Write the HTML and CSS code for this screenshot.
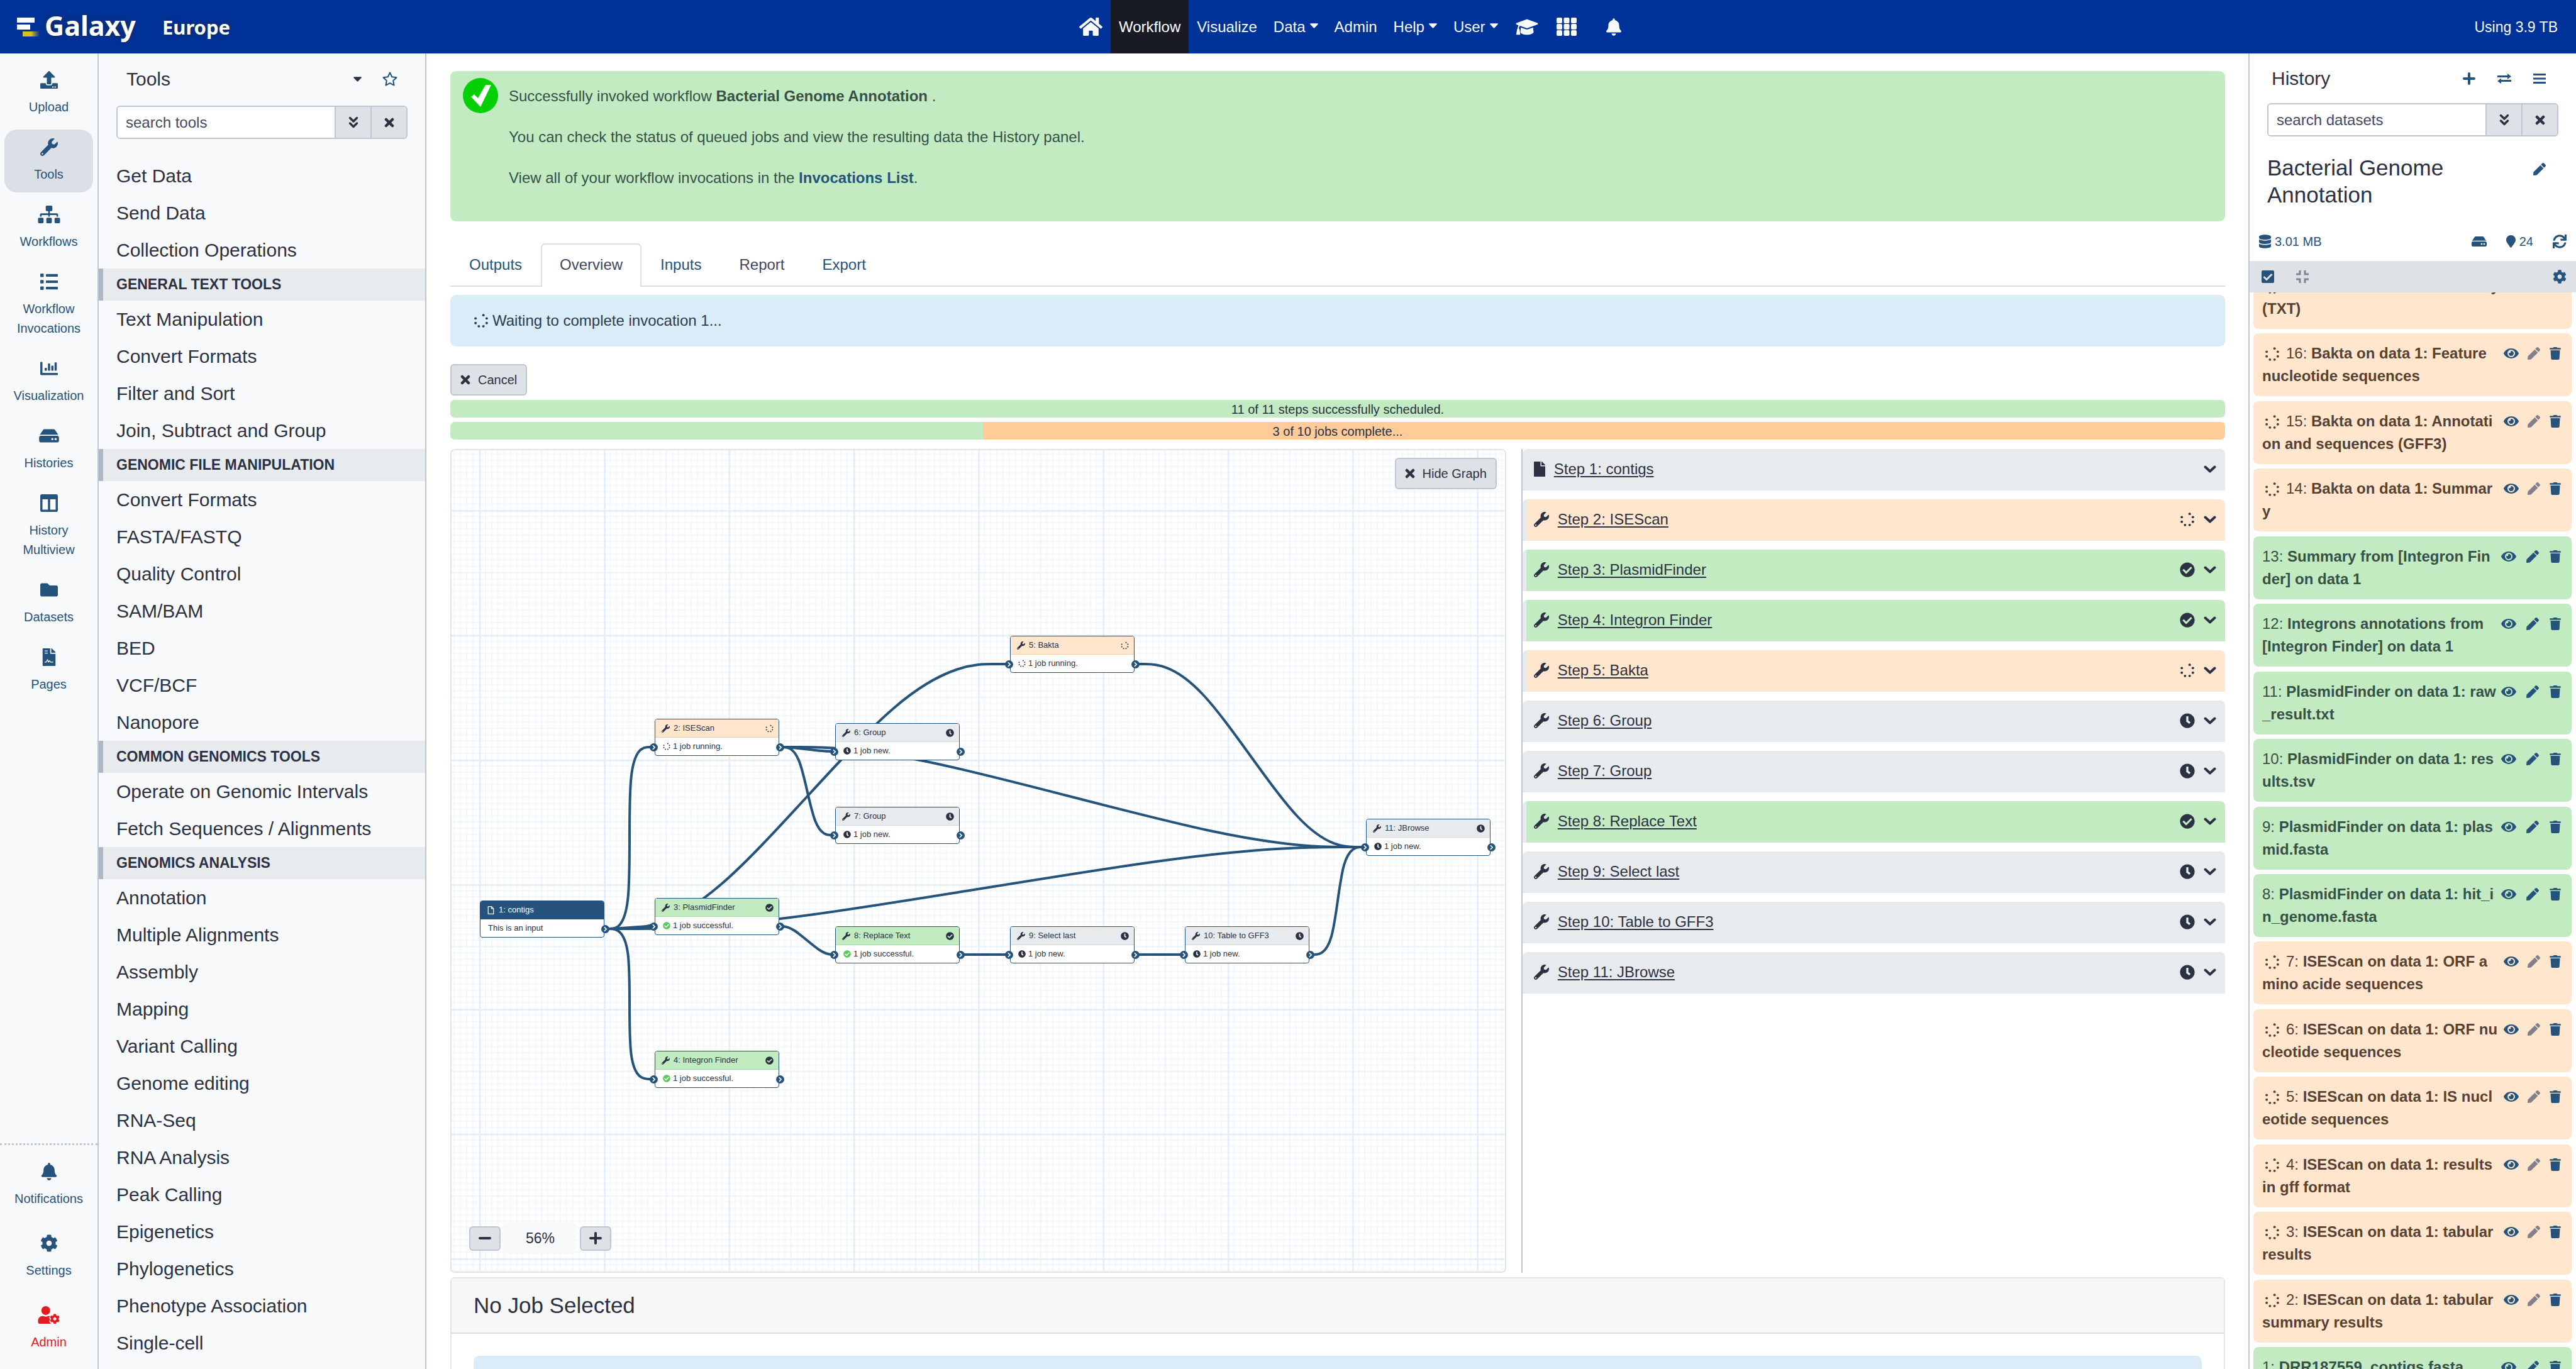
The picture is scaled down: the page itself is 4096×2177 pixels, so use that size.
FILE: index.html
```html
<!DOCTYPE html>
<html lang="en">
<head>
<meta charset="utf-8">
<title>Galaxy Europe</title>
<link rel="stylesheet" href="styles.css">
</head>
<body>
<svg class="sprite" aria-hidden="true">
  <defs>
    <linearGradient id="fade"><stop offset="0" stop-color="#d8c126"/><stop offset=".5" stop-color="#d8c126"/><stop offset="1" stop-color="#d8c126" stop-opacity="0"/></linearGradient>
  </defs>
  <symbol id="logo" viewBox="0 0 36 30"><path fill="#fff" d="M0 0h28v8H0zM0 11h21v8H0z"/><path fill="url(#fade)" d="M9 22h27v8H9z"/></symbol>
  <symbol id="wrench" viewBox="0 0 512 512"><path d="M507.73 109.1c-2.24-9.03-13.54-12.09-20.12-5.51l-74.36 74.36-67.88-11.31-11.31-67.88 74.36-74.36c6.62-6.62 3.43-17.9-5.66-20.16-47.38-11.74-99.55.91-136.58 37.93-39.64 39.64-50.55 97.1-34.05 147.2L18.74 402.76c-24.99 24.99-24.99 65.51 0 90.5 24.99 24.99 65.51 24.99 90.5 0l213.21-213.21c50.12 16.71 107.47 5.68 147.37-34.22 37.07-37.07 49.7-89.32 37.91-136.73zM64 472c-13.25 0-24-10.75-24-24 0-13.26 10.75-24 24-24s24 10.74 24 24c0 13.25-10.75 24-24 24z"/></symbol>
  <symbol id="upload" viewBox="0 0 512 512"><path d="M296 384h-80c-13.3 0-24-10.7-24-24V192h-87.7c-17.8 0-26.7-21.5-14.1-34.1L242.3 5.7c7.5-7.5 19.8-7.5 27.3 0l152.2 152.2c12.6 12.6 3.7 34.1-14.1 34.1H320v168c0 13.3-10.7 24-24 24zm216-8v112c0 13.3-10.7 24-24 24H24c-13.3 0-24-10.7-24-24V376c0-13.3 10.7-24 24-24h136v8c0 30.9 25.1 56 56 56h80c30.9 0 56-25.1 56-56v-8h136c13.3 0 24 10.7 24 24zm-124 88c0-11-9-20-20-20s-20 9-20 20 9 20 20 20 20-9 20-20zm64 0c0-11-9-20-20-20s-20 9-20 20 9 20 20 20 20-9 20-20z"/></symbol>
  <symbol id="sitemap" viewBox="0 0 640 512"><path d="M128 352H32c-17.67 0-32 14.33-32 32v96c0 17.67 14.33 32 32 32h96c17.67 0 32-14.33 32-32v-96c0-17.67-14.33-32-32-32zm-24-80h192v48h48v-48h192v48h48v-57.59c0-21.17-17.23-38.41-38.41-38.41H344v-64h40c17.67 0 32-14.33 32-32V32c0-17.67-14.33-32-32-32H256c-17.67 0-32 14.33-32 32v96c0 17.67 14.33 32 32 32h40v64H94.41C73.23 224 56 241.23 56 262.41V320h48v-48zm264 80h-96c-17.67 0-32 14.33-32 32v96c0 17.67 14.33 32 32 32h96c17.67 0 32-14.33 32-32v-96c0-17.67-14.33-32-32-32zm240 0h-96c-17.67 0-32 14.33-32 32v96c0 17.67 14.33 32 32 32h96c17.67 0 32-14.33 32-32v-96c0-17.67-14.33-32-32-32z"/></symbol>
  <symbol id="list" viewBox="0 0 512 512"><rect x="0" y="20" width="100" height="100" rx="16"/><rect x="0" y="206" width="100" height="100" rx="16"/><rect x="0" y="392" width="100" height="100" rx="16"/><rect x="165" y="32" width="347" height="76" rx="16"/><rect x="165" y="218" width="347" height="76" rx="16"/><rect x="165" y="404" width="347" height="76" rx="16"/></symbol>
  <symbol id="chart" viewBox="0 0 512 512"><path d="M16 64h32c9 0 16 7 16 16v304h432c9 0 16 7 16 16v32c0 9-7 16-16 16H32c-18 0-32-14-32-32V80c0-9 7-16 16-16z"/><rect x="128" y="236" width="64" height="84" rx="12"/><rect x="224" y="108" width="64" height="212" rx="12"/><rect x="320" y="172" width="64" height="148" rx="12"/><rect x="416" y="76" width="64" height="244" rx="12"/></symbol>
  <symbol id="hdd" viewBox="0 0 576 512"><path d="M576 304v96c0 26.51-21.49 48-48 48H48c-26.51 0-48-21.49-48-48v-96c0-26.51 21.49-48 48-48h480c26.51 0 48 21.49 48 48zm-48-80a79.557 79.557 0 0 1 30.777 6.165L462.25 85.374A48.003 48.003 0 0 0 422.311 64H153.689a48 48 0 0 0-39.938 21.374L17.223 230.165A79.557 79.557 0 0 1 48 224h480zm-48 96c-17.673 0-32 14.327-32 32s14.327 32 32 32 32-14.327 32-32-14.327-32-32-32zm-96 0c-17.673 0-32 14.327-32 32s14.327 32 32 32 32-14.327 32-32-14.327-32-32-32z"/></symbol>
  <symbol id="columns" viewBox="0 0 512 512"><path d="M464 0H48C21.49 0 0 21.49 0 48v416c0 26.51 21.49 48 48 48h416c26.51 0 48-21.49 48-48V48c0-26.51-21.49-48-48-48zM224 448H64V144h160v304zm224 0H288V144h160v304z"/></symbol>
  <symbol id="folder" viewBox="0 0 512 512"><path d="M464 128H272l-64-64H48C21.49 64 0 85.49 0 112v288c0 26.51 21.49 48 48 48h416c26.51 0 48-21.49 48-48V176c0-26.51-21.49-48-48-48z"/></symbol>
  <symbol id="file" viewBox="0 0 384 512"><path d="M224 136V0H24C10.7 0 0 10.7 0 24v464c0 13.3 10.7 24 24 24h336c13.3 0 24-10.7 24-24V160H248c-13.2 0-24-10.8-24-24zm160-14.1v6.1H256V0h6.1c6.4 0 12.5 2.5 17 7l97.9 98c4.5 4.5 7 10.6 7 16.9z"/></symbol>
  <symbol id="file-o" viewBox="0 0 384 512"><path fill="none" stroke="currentColor" stroke-width="48" stroke-linejoin="round" d="M24 24h210l126 126v338H24zM228 24v132h132"/></symbol>
  <symbol id="contract" viewBox="0 0 384 512"><use href="#file"/><path fill="none" stroke="#f8f9fb" stroke-width="24" stroke-linejoin="round" stroke-linecap="round" d="M74 76h70M74 140h70M74 400h30c20 0 34-74 44-74 12 0 10 74 24 74 16 0 12-36 30-36 16 0 20 36 40 36h64"/></symbol>
  <symbol id="bell" viewBox="0 0 448 512"><path d="M224 512c35.32 0 63.97-28.65 63.97-64H160.03c0 35.35 28.65 64 63.97 64zm215.39-149.71c-19.32-20.76-55.47-51.99-55.47-154.29 0-77.7-54.48-139.9-127.94-155.16V32c0-17.67-14.32-32-31.98-32s-31.98 14.33-31.98 32v20.84C118.56 68.1 64.08 130.3 64.08 208c0 102.3-36.15 133.53-55.47 154.29-6 6.45-8.66 14.16-8.61 21.71.11 16.4 12.98 32 32.1 32h383.8c19.12 0 32-15.6 32.1-32 .05-7.55-2.61-15.27-8.61-21.71z"/></symbol>
  <symbol id="cog" viewBox="0 0 512 512"><path d="M487.4 315.7l-42.6-24.6c4.3-23.2 4.3-47 0-70.2l42.6-24.6c4.9-2.8 7.1-8.6 5.5-14-11.1-35.6-30-67.8-54.7-94.6-3.8-4.1-10-5.1-14.8-2.3L380.8 110c-17.9-15.4-38.5-27.3-60.8-35.1V25.8c0-5.6-3.9-10.5-9.4-11.7-36.7-8.2-74.3-7.8-109.2 0-5.5 1.2-9.4 6.1-9.4 11.7V75c-22.2 7.9-42.8 19.8-60.8 35.1L88.7 85.5c-4.9-2.8-11-1.9-14.8 2.3-24.7 26.7-43.6 58.9-54.7 94.6-1.7 5.4.6 11.2 5.5 14L67.3 221c-4.3 23.2-4.3 47 0 70.2l-42.6 24.6c-4.9 2.8-7.1 8.6-5.5 14 11.1 35.6 30 67.8 54.7 94.6 3.8 4.1 10 5.1 14.8 2.3l42.6-24.6c17.9 15.4 38.5 27.3 60.8 35.1v49.2c0 5.6 3.9 10.5 9.4 11.7 36.7 8.2 74.3 7.8 109.2 0 5.5-1.2 9.4-6.1 9.4-11.7v-49.2c22.2-7.9 42.8-19.8 60.8-35.1l42.6 24.6c4.9 2.8 11 1.9 14.8-2.3 24.7-26.7 43.6-58.9 54.7-94.6 1.5-5.5-.7-11.3-5.6-14.1zM256 336c-44.1 0-80-35.9-80-80s35.9-80 80-80 80 35.9 80 80-35.9 80-80 80z"/></symbol>
  <symbol id="user-cog" viewBox="0 0 640 512"><circle cx="224" cy="128" r="128"/><path d="M48 512c-26 0-48-21-48-48v-42c0-74 60-134 134-134h17c22 10 47 16 73 16s51-6 73-16h17c12 0 22 2 32 4-16 22-26 46-20 60l16 12c-2 12-2 30 0 44-16 8-20 22-14 40 8 26 28 50 52 62l34 2c8 0-8 0-12 0z"/><g transform="translate(338 222) scale(.58)"><path d="M487.4 315.7l-42.6-24.6c4.3-23.2 4.3-47 0-70.2l42.6-24.6c4.9-2.8 7.1-8.6 5.5-14-11.1-35.6-30-67.8-54.7-94.6-3.8-4.1-10-5.1-14.8-2.3L380.8 110c-17.9-15.4-38.5-27.3-60.8-35.1V25.8c0-5.6-3.9-10.5-9.4-11.7-36.7-8.2-74.3-7.8-109.2 0-5.5 1.2-9.4 6.1-9.4 11.7V75c-22.2 7.9-42.8 19.8-60.8 35.1L88.7 85.5c-4.9-2.8-11-1.9-14.8 2.3-24.7 26.7-43.6 58.9-54.7 94.6-1.7 5.4.6 11.2 5.5 14L67.3 221c-4.3 23.2-4.3 47 0 70.2l-42.6 24.6c-4.9 2.8-7.1 8.6-5.5 14 11.1 35.6 30 67.8 54.7 94.6 3.8 4.1 10 5.1 14.8 2.3l42.6-24.6c17.9 15.4 38.5 27.3 60.8 35.1v49.2c0 5.6 3.9 10.5 9.4 11.7 36.7 8.2 74.3 7.8 109.2 0 5.5-1.2 9.4-6.1 9.4-11.7v-49.2c22.2-7.9 42.8-19.8 60.8-35.1l42.6 24.6c4.9 2.8 11 1.9 14.8-2.3 24.7-26.7 43.6-58.9 54.7-94.6 1.5-5.5-.7-11.3-5.6-14.1zM256 336c-44.1 0-80-35.9-80-80s35.9-80 80-80 80 35.9 80 80-35.9 80-80 80z"/></g></symbol>
  <symbol id="home" viewBox="0 32 576 448"><path d="M280.37 148.26L96 300.11V464a16 16 0 0 0 16 16l112.06-.29a16 16 0 0 0 15.92-16V368a16 16 0 0 1 16-16h64a16 16 0 0 1 16 16v95.64a16 16 0 0 0 16 16.05L464 480a16 16 0 0 0 16-16V300L295.67 148.26a12.19 12.19 0 0 0-15.3 0zM571.6 251.47L488 182.56V44.05a12 12 0 0 0-12-12h-56a12 12 0 0 0-12 12v72.61L318.47 43a48 48 0 0 0-61 0L4.34 251.47a12 12 0 0 0-1.6 16.9l25.5 31A12 12 0 0 0 45.15 301l235.22-193.74a12.19 12.19 0 0 1 15.3 0L530.9 301a12 12 0 0 0 16.9-1.6l25.5-31a12 12 0 0 0-1.7-16.93z"/></symbol>
  <symbol id="grad" viewBox="0 0 640 512"><path d="M320 32c8 0 16 1 23 4l280 101c10 4 17 13 17 23s-7 20-17 23L343 284c-15 5-31 5-46 0L117 220c-24 20-32 46-33 78 14 8 22 22 22 36l18 126c2 10-6 20-16 20H24c-10 0-18-10-16-20l22-126c0-14 6-26 16-34 2-30 10-64 30-92l-59-25C7 180 0 170 0 160s7-19 17-23L297 36c7-3 15-4 23-4zM142 268l144 52c22 8 46 8 68 0l144-52 14 132c0 35-86 80-192 80s-192-45-192-80z"/></symbol>
  <symbol id="apps" viewBox="0 0 32 29"><rect width="9" height="9" rx="2"/><rect x="11.500" width="9" height="9" rx="2"/><rect x="23" width="9" height="9" rx="2"/><rect y="10" width="9" height="9" rx="2"/><rect x="11.500" y="10" width="9" height="9" rx="2"/><rect x="23" y="10" width="9" height="9" rx="2"/><rect y="20" width="9" height="9" rx="2"/><rect x="11.500" y="20" width="9" height="9" rx="2"/><rect x="23" y="20" width="9" height="9" rx="2"/></symbol>
  <symbol id="caret" viewBox="0 0 14 8"><path d="M1 0h12c1 0 1 1 .5 1.500L8 7.500c-.6.6-1.400.6-2 0L.5 1.500C0 1 0 0 1 0z"/></symbol>
  <symbol id="star" viewBox="0 0 24 24"><path fill="none" stroke="currentColor" stroke-width="2" stroke-linejoin="round" d="M12 1.500l3.200 6.700 7.300 1-5.300 5.100 1.300 7.300L12 18.100l-6.500 3.500 1.300-7.300L1.500 9.200l7.300-1z"/></symbol>
  <symbol id="double-down" viewBox="0 0 16 20"><path fill="none" stroke="currentColor" stroke-width="3.500" stroke-linecap="round" stroke-linejoin="round" d="M2.500 2.500L8 8l5.500-5.500M2.500 11L8 16.500 13.500 11"/></symbol>
  <symbol id="times" viewBox="0 0 16 16"><path fill="none" stroke="currentColor" stroke-width="4.500" stroke-linecap="round" d="M3 3l10 10M13 3L3 13"/></symbol>
  <symbol id="chevron" viewBox="0 0 20 12"><path fill="none" stroke="currentColor" stroke-width="4" stroke-linecap="round" stroke-linejoin="round" d="M2.500 2.500L10 9.500l7.500-7"/></symbol>
  <symbol id="plus" viewBox="0 0 20 20"><path fill="none" stroke="currentColor" stroke-width="4" stroke-linecap="round" d="M10 2v16M2 10h16"/></symbol>
  <symbol id="minus" viewBox="0 0 20 20"><path fill="none" stroke="currentColor" stroke-width="4" stroke-linecap="round" d="M2 10h16"/></symbol>
  <symbol id="exchange" viewBox="0 0 22 16"><path d="M0 3h16V0l6 4.500-6 4.500V6H0zM22 10H6V7.500L0 12l6 4v-3h16z"/></symbol>
  <symbol id="bars" viewBox="0 0 20 16"><path d="M0 0h20v3H0zM0 6.500h20v3H0zM0 13h20v3H0z"/></symbol>
  <symbol id="eye" viewBox="0 0 576 512"><path d="M572.52 241.4C518.29 135.59 410.93 64 288 64S57.68 135.64 3.480 241.41a32.35 32.35 0 0 0 0 29.19C57.710 376.41 165.070 448 288 448s230.320-71.640 284.520-177.410a32.350 32.350 0 0 0 0-29.190zM288 400a144 144 0 1 1 144-144 143.930 143.930 0 0 1-144 144zm0-240a95.310 95.310 0 0 0-25.310 3.790 47.850 47.850 0 0 1-66.900 66.900A95.780 95.780 0 1 0 288 160z"/></symbol>
  <symbol id="pen" viewBox="0 0 512 512"><path d="M290.740 93.240l128.020 128.020-277.990 277.990-114.140 12.600C11.350 513.540-1.560 500.620.140 485.340l12.700-114.220 277.900-277.880zm207.200-19.060l-60.110-60.110c-18.750-18.750-49.160-18.750-67.910 0l-56.550 56.550 128.020 128.020 56.550-56.550c18.750-18.760 18.750-49.160 0-67.910z"/></symbol>
  <symbol id="trash" viewBox="0 0 448 512"><path d="M432 32H312l-9.400-18.700A24 24 0 0 0 281.100 0H166.800a23.720 23.720 0 0 0-21.400 13.300L136 32H16A16 16 0 0 0 0 48v32a16 16 0 0 0 16 16h416a16 16 0 0 0 16-16V48a16 16 0 0 0-16-16zM53.200 467a48 48 0 0 0 47.900 45h245.800a48 48 0 0 0 47.900-45L416 128H32z"/></symbol>
  <symbol id="database" viewBox="0 0 448 512"><path d="M448 73.143v45.714C448 159.143 347.667 192 224 192S0 159.143 0 118.857V73.143C0 32.857 100.333 0 224 0s224 32.857 224 73.143zM448 176v102.857C448 319.143 347.667 352 224 352S0 319.143 0 278.857V176c48.125 33.143 136.208 48.572 224 48.572S399.874 209.143 448 176zm0 160v102.857C448 479.143 347.667 512 224 512S0 479.143 0 438.857V336c48.125 33.143 136.208 48.572 224 48.572S399.874 369.143 448 336z"/></symbol>
  <symbol id="marker" viewBox="0 0 384 512"><path d="M172.268 501.670C26.970 291.031 0 269.413 0 192 0 85.961 85.961 0 192 0s192 85.961 192 192c0 77.413-26.970 99.031-172.268 309.670-9.535 13.774-29.930 13.773-39.464 0z"/></symbol>
  <symbol id="sync" viewBox="0 0 512 512"><path d="M440.650 12.570l4 82.770A247.160 247.160 0 0 0 255.830 8C134.730 8 33.910 94.920 12.290 209.820A12 12 0 0 0 24.090 224h49.050a12 12 0 0 0 11.670-9.260 175.910 175.910 0 0 1 317-56.940l-101.460-4.860a12 12 0 0 0-12.570 12v47.410a12 12 0 0 0 12 12H500a12 12 0 0 0 12-12V12a12 12 0 0 0-12-12h-47.370a12 12 0 0 0-11.980 12.570zM255.830 432a175.610 175.610 0 0 1-146-77.800l101.800 4.870a12 12 0 0 0 12.570-12v-47.400a12 12 0 0 0-12-12H12a12 12 0 0 0-12 12V500a12 12 0 0 0 12 12h47.350a12 12 0 0 0 12-12.600l-4.150-82.570A247.170 247.170 0 0 0 255.830 504c121.110 0 221.930-86.920 243.550-201.820a12 12 0 0 0-11.800-14.180h-49.050a12 12 0 0 0-11.670 9.260A175.860 175.860 0 0 1 255.830 432z"/></symbol>
  <symbol id="check-square" viewBox="0 0 20 20"><rect width="20" height="20" rx="2"/><path fill="none" stroke="#dee1e6" stroke-width="3" d="M3.500 10l4.500 4.500L16.500 6"/></symbol>
  <symbol id="compress" viewBox="0 0 20 20"><path fill="none" stroke="currentColor" stroke-width="3" d="M6 0v6H0M14 0v6h6M6 20v-6H0M14 20v-6h6"/></symbol>
  <symbol id="check" viewBox="0 0 512 512"><path d="M504 256c0 136.967-111.033 248-248 248S8 392.967 8 256 119.033 8 256 8s248 111.033 248 248zM227.314 387.314l184-184c6.248-6.248 6.248-16.379 0-22.627l-22.627-22.627c-6.248-6.249-16.379-6.249-22.628 0L216 308.118l-70.059-70.059c-6.248-6.248-16.379-6.248-22.628 0l-22.627 22.627c-6.248 6.248-6.248 16.379 0 22.627l104 104c6.249 6.249 16.379 6.249 22.628.001z"/></symbol>
  <symbol id="clock" viewBox="0 0 512 512"><path d="M256 8C119 8 8 119 8 256s111 248 248 248 248-111 248-248S393 8 256 8zm57.100 350.100L224.900 294c-3.100-2.300-4.900-5.900-4.900-9.700V116c0-6.600 5.400-12 12-12h48c6.600 0 12 5.400 12 12v137.700l63.500 46.200c5.400 3.900 6.500 11.400 2.600 16.800l-28.200 38.800c-3.900 5.300-11.400 6.500-16.800 2.600z"/></symbol>
  <symbol id="spinner" viewBox="0 0 512 512"><circle cx="334" cy="67" r="42"/><circle cx="445" cy="178" r="42"/><circle cx="445" cy="334" r="42"/><circle cx="334" cy="445" r="42"/><circle cx="178" cy="445" r="42"/><circle cx="67" cy="334" r="42"/><circle cx="67" cy="178" r="42"/></symbol>
  <symbol id="done" viewBox="0 0 56 56"><circle cx="28" cy="28" r="28" fill="#05cf05"/><path fill="#fff" d="M13 30l5-4 6 6 12-21h9L28 46z"/></symbol>
  <symbol id="port" viewBox="0 0 12 12"><circle cx="6" cy="6" r="6" fill="#25537b"/><path fill="none" stroke="#fff" stroke-width="1.600" d="M4.500 3l3 3-3 3"/></symbol>
</svg>

<header class="masthead">
  <a class="brand" href="#"><svg class="brand-mark"><use href="#logo"/></svg><span class="brand-name">Galaxy</span></a>
  <span class="brand-site">Europe</span>
  <nav class="topnav">
    <a href="#" aria-label="Home"><svg class="nav-home"><use href="#home"/></svg></a>
    <a href="#" class="active">Workflow</a>
    <a href="#">Visualize</a>
    <a href="#">Data<svg class="caret"><use href="#caret"/></svg></a>
    <a href="#">Admin</a>
    <a href="#">Help<svg class="caret"><use href="#caret"/></svg></a>
    <a href="#">User<svg class="caret"><use href="#caret"/></svg></a>
    <a href="#" aria-label="Tutorials"><svg class="nav-grad"><use href="#grad"/></svg></a>
    <a href="#" aria-label="Apps"><svg class="nav-apps"><use href="#apps"/></svg></a>
    <a href="#" aria-label="Notifications" class="nav-last"><svg class="nav-bell"><use href="#bell"/></svg></a>
  </nav>
  <span class="quota">Using 3.9 TB</span>
</header>

<div class="app">
  <nav class="activity">
    <div class="activity-top">
      <a href="#"><svg><use href="#upload"/></svg><span>Upload</span></a>
      <a href="#" class="current"><svg><use href="#wrench"/></svg><span>Tools</span></a>
      <a href="#"><svg class="wide"><use href="#sitemap"/></svg><span>Workflows</span></a>
      <a href="#"><svg><use href="#list"/></svg><span>Workflow Invocations</span></a>
      <a href="#"><svg><use href="#chart"/></svg><span>Visualization</span></a>
      <a href="#"><svg class="wide"><use href="#hdd"/></svg><span>Histories</span></a>
      <a href="#"><svg><use href="#columns"/></svg><span>History Multiview</span></a>
      <a href="#"><svg><use href="#folder"/></svg><span>Datasets</span></a>
      <a href="#"><svg><use href="#contract"/></svg><span>Pages</span></a>
    </div>
    <div class="activity-bottom">
      <a href="#"><svg><use href="#bell"/></svg><span>Notifications</span></a>
      <a href="#"><svg><use href="#cog"/></svg><span>Settings</span></a>
      <a href="#" class="admin"><svg class="wide"><use href="#user-cog"/></svg><span>Admin</span></a>
    </div>
  </nav>

  <aside class="tools">
    <div class="panel-head">
      <h2>Tools</h2>
      <button type="button" class="plain" aria-label="Panel views"><svg class="caret"><use href="#caret"/></svg></button>
      <button type="button" class="plain" aria-label="Favorites"><svg class="s24"><use href="#star"/></svg></button>
    </div>
    <div class="search">
      <input type="text" placeholder="search tools" aria-label="search tools">
      <button type="button" aria-label="Advanced search"><svg class="s-dd"><use href="#double-down"/></svg></button>
      <button type="button" aria-label="Clear search"><svg class="s16"><use href="#times"/></svg></button>
    </div>
    <div class="tool-list">
      <a href="#">Get Data</a>
      <a href="#">Send Data</a>
      <a href="#">Collection Operations</a>
      <h3>GENERAL TEXT TOOLS</h3>
      <a href="#">Text Manipulation</a>
      <a href="#">Convert Formats</a>
      <a href="#">Filter and Sort</a>
      <a href="#">Join, Subtract and Group</a>
      <h3>GENOMIC FILE MANIPULATION</h3>
      <a href="#">Convert Formats</a>
      <a href="#">FASTA/FASTQ</a>
      <a href="#">Quality Control</a>
      <a href="#">SAM/BAM</a>
      <a href="#">BED</a>
      <a href="#">VCF/BCF</a>
      <a href="#">Nanopore</a>
      <h3>COMMON GENOMICS TOOLS</h3>
      <a href="#">Operate on Genomic Intervals</a>
      <a href="#">Fetch Sequences / Alignments</a>
      <h3>GENOMICS ANALYSIS</h3>
      <a href="#">Annotation</a>
      <a href="#">Multiple Alignments</a>
      <a href="#">Assembly</a>
      <a href="#">Mapping</a>
      <a href="#">Variant Calling</a>
      <a href="#">Genome editing</a>
      <a href="#">RNA-Seq</a>
      <a href="#">RNA Analysis</a>
      <a href="#">Peak Calling</a>
      <a href="#">Epigenetics</a>
      <a href="#">Phylogenetics</a>
      <a href="#">Phenotype Association</a>
      <a href="#">Single-cell</a>
    </div>
  </aside>

  <main class="center">
    <div class="alert-success">
      <svg class="alert-icon"><use href="#done"/></svg>
      <div>
        <p>Successfully invoked workflow <b>Bacterial Genome Annotation</b> .</p>
        <p>You can check the status of queued jobs and view the resulting data the History panel.</p>
        <p>View all of your workflow invocations in the <a href="#">Invocations List</a>.</p>
      </div>
    </div>

    <nav class="tabs">
      <a href="#">Outputs</a>
      <a href="#" class="active">Overview</a>
      <a href="#">Inputs</a>
      <a href="#" class="muted">Report</a>
      <a href="#">Export</a>
    </nav>

    <div class="alert-info"><svg class="s24"><use href="#spinner"/></svg><span>Waiting to complete invocation 1...</span></div>

    <button type="button" class="btn"><svg class="s16"><use href="#times"/></svg>Cancel</button>

    <div class="progress"><span class="progress-text">11 of 11 steps successfully scheduled.</span></div>
    <div class="progress jobs"><span class="progress-text">3 of 10 jobs complete...</span></div>

    <div class="invocation">
      <section class="graph">
        <svg class="grid-lines" aria-hidden="true">
          <defs>
            <pattern id="grid" width="200" height="200" patternUnits="userSpaceOnUse" patternTransform="translate(44 -103) scale(.9915)">
              <path stroke="#f5f8fb" stroke-width="2" d="M10 0v200M20 0v200M30 0v200M40 0v200M50 0v200M60 0v200M70 0v200M80 0v200M90 0v200M110 0v200M120 0v200M130 0v200M140 0v200M150 0v200M160 0v200M170 0v200M180 0v200M190 0v200M0 10h200M0 20h200M0 30h200M0 40h200M0 50h200M0 60h200M0 70h200M0 80h200M0 90h200M0 110h200M0 120h200M0 130h200M0 140h200M0 150h200M0 160h200M0 170h200M0 180h200M0 190h200"/>
              <path stroke="#ecf3f9" stroke-width="2" d="M100 0v200M0 100h200"/>
              <path stroke="#e2edf7" stroke-width="3" d="M1 0v200M0 1h200"/>
            </pattern>
          </defs>
          <rect width="100%" height="100%" fill="url(#grid)"/>
        </svg>
        <svg class="links" id="links" aria-hidden="true"></svg>

        <div class="node input" id="n1"><div class="node-head"><svg><use href="#file-o"/></svg><span>1: contigs</span></div><div class="node-body">This is an input</div><svg class="port out"><use href="#port"/></svg></div>
        <div class="node running" id="n2"><div class="node-head"><svg><use href="#wrench"/></svg><span>2: ISEScan</span><svg><use href="#spinner"/></svg></div><div class="node-body"><svg><use href="#spinner"/></svg>1 job running.</div><svg class="port in"><use href="#port"/></svg><svg class="port out"><use href="#port"/></svg></div>
        <div class="node ok" id="n3"><div class="node-head"><svg><use href="#wrench"/></svg><span>3: PlasmidFinder</span><svg><use href="#check"/></svg></div><div class="node-body"><svg><use href="#check"/></svg>1 job successful.</div><svg class="port in"><use href="#port"/></svg><svg class="port out"><use href="#port"/></svg></div>
        <div class="node ok" id="n4"><div class="node-head"><svg><use href="#wrench"/></svg><span>4: Integron Finder</span><svg><use href="#check"/></svg></div><div class="node-body"><svg><use href="#check"/></svg>1 job successful.</div><svg class="port in"><use href="#port"/></svg><svg class="port out"><use href="#port"/></svg></div>
        <div class="node running" id="n5"><div class="node-head"><svg><use href="#wrench"/></svg><span>5: Bakta</span><svg><use href="#spinner"/></svg></div><div class="node-body"><svg><use href="#spinner"/></svg>1 job running.</div><svg class="port in"><use href="#port"/></svg><svg class="port out"><use href="#port"/></svg></div>
        <div class="node" id="n6"><div class="node-head"><svg><use href="#wrench"/></svg><span>6: Group</span><svg><use href="#clock"/></svg></div><div class="node-body"><svg><use href="#clock"/></svg>1 job new.</div><svg class="port in"><use href="#port"/></svg><svg class="port out"><use href="#port"/></svg></div>
        <div class="node" id="n7"><div class="node-head"><svg><use href="#wrench"/></svg><span>7: Group</span><svg><use href="#clock"/></svg></div><div class="node-body"><svg><use href="#clock"/></svg>1 job new.</div><svg class="port in"><use href="#port"/></svg><svg class="port out"><use href="#port"/></svg></div>
        <div class="node ok" id="n8"><div class="node-head"><svg><use href="#wrench"/></svg><span>8: Replace Text</span><svg><use href="#check"/></svg></div><div class="node-body"><svg><use href="#check"/></svg>1 job successful.</div><svg class="port in"><use href="#port"/></svg><svg class="port out"><use href="#port"/></svg></div>
        <div class="node" id="n9"><div class="node-head"><svg><use href="#wrench"/></svg><span>9: Select last</span><svg><use href="#clock"/></svg></div><div class="node-body"><svg><use href="#clock"/></svg>1 job new.</div><svg class="port in"><use href="#port"/></svg><svg class="port out"><use href="#port"/></svg></div>
        <div class="node" id="n10"><div class="node-head"><svg><use href="#wrench"/></svg><span>10: Table to GFF3</span><svg><use href="#clock"/></svg></div><div class="node-body"><svg><use href="#clock"/></svg>1 job new.</div><svg class="port in"><use href="#port"/></svg><svg class="port out"><use href="#port"/></svg></div>
        <div class="node" id="n11"><div class="node-head"><svg><use href="#wrench"/></svg><span>11: JBrowse</span><svg><use href="#clock"/></svg></div><div class="node-body"><svg><use href="#clock"/></svg>1 job new.</div><svg class="port in"><use href="#port"/></svg><svg class="port out"><use href="#port"/></svg></div>

        <button type="button" class="btn hide-graph"><svg class="s16"><use href="#times"/></svg>Hide Graph</button>
        <div class="zoom">
          <button type="button" aria-label="Zoom out"><svg class="s20"><use href="#minus"/></svg></button>
          <span class="zoom-level">56%</span>
          <button type="button" aria-label="Zoom in"><svg class="s20"><use href="#plus"/></svg></button>
        </div>
      </section>

      <section class="steps">
        <div class="step"><svg class="s-file"><use href="#file"/></svg><a href="#">Step 1: contigs</a><svg class="s-chev"><use href="#chevron"/></svg></div>
        <div class="step running"><svg class="s24"><use href="#wrench"/></svg><a href="#">Step 2: ISEScan</a><svg class="s24"><use href="#spinner"/></svg><svg class="s-chev"><use href="#chevron"/></svg></div>
        <div class="step ok"><svg class="s24"><use href="#wrench"/></svg><a href="#">Step 3: PlasmidFinder</a><svg class="s24"><use href="#check"/></svg><svg class="s-chev"><use href="#chevron"/></svg></div>
        <div class="step ok"><svg class="s24"><use href="#wrench"/></svg><a href="#">Step 4: Integron Finder</a><svg class="s24"><use href="#check"/></svg><svg class="s-chev"><use href="#chevron"/></svg></div>
        <div class="step running"><svg class="s24"><use href="#wrench"/></svg><a href="#">Step 5: Bakta</a><svg class="s24"><use href="#spinner"/></svg><svg class="s-chev"><use href="#chevron"/></svg></div>
        <div class="step"><svg class="s24"><use href="#wrench"/></svg><a href="#">Step 6: Group</a><svg class="s24"><use href="#clock"/></svg><svg class="s-chev"><use href="#chevron"/></svg></div>
        <div class="step"><svg class="s24"><use href="#wrench"/></svg><a href="#">Step 7: Group</a><svg class="s24"><use href="#clock"/></svg><svg class="s-chev"><use href="#chevron"/></svg></div>
        <div class="step ok"><svg class="s24"><use href="#wrench"/></svg><a href="#">Step 8: Replace Text</a><svg class="s24"><use href="#check"/></svg><svg class="s-chev"><use href="#chevron"/></svg></div>
        <div class="step"><svg class="s24"><use href="#wrench"/></svg><a href="#">Step 9: Select last</a><svg class="s24"><use href="#clock"/></svg><svg class="s-chev"><use href="#chevron"/></svg></div>
        <div class="step"><svg class="s24"><use href="#wrench"/></svg><a href="#">Step 10: Table to GFF3</a><svg class="s24"><use href="#clock"/></svg><svg class="s-chev"><use href="#chevron"/></svg></div>
        <div class="step"><svg class="s24"><use href="#wrench"/></svg><a href="#">Step 11: JBrowse</a><svg class="s24"><use href="#clock"/></svg><svg class="s-chev"><use href="#chevron"/></svg></div>
      </section>
    </div>

    <section class="job-card">
      <h2>No Job Selected</h2>
      <div class="job-body"><div class="job-info"></div></div>
    </section>
  </main>

  <aside class="history">
    <div class="panel-head">
      <h2>History</h2>
      <button type="button" class="plain" aria-label="Create new history"><svg class="s20"><use href="#plus"/></svg></button>
      <button type="button" class="plain" aria-label="Switch history"><svg class="s-ex"><use href="#exchange"/></svg></button>
      <button type="button" class="plain" aria-label="History options"><svg class="s20"><use href="#bars"/></svg></button>
    </div>
    <div class="search">
      <input type="text" placeholder="search datasets" aria-label="search datasets">
      <button type="button" aria-label="Advanced search"><svg class="s-dd"><use href="#double-down"/></svg></button>
      <button type="button" aria-label="Clear search"><svg class="s16"><use href="#times"/></svg></button>
    </div>
    <div class="history-title">
      <h1>Bacterial Genome Annotation</h1>
      <button type="button" class="plain" aria-label="Rename history"><svg class="s20"><use href="#pen"/></svg></button>
    </div>
    <div class="history-stats">
      <svg class="s-db"><use href="#database"/></svg><span class="size">3.01 MB</span>
      <svg class="s24"><use href="#hdd"/></svg>
      <svg class="s-mark"><use href="#marker"/></svg><span>24</span>
      <svg class="s20 refresh"><use href="#sync"/></svg>
    </div>
    <div class="history-tools">
      <svg class="s20"><use href="#check-square"/></svg>
      <svg class="s20 dim"><use href="#compress"/></svg>
      <svg class="s20 last"><use href="#cog"/></svg>
    </div>
    <div class="datasets">
      <ul>
        <li class="running"><svg class="s24 spin"><use href="#spinner"/></svg>17: <b>Bakta on data 1: summary<br>(TXT)</b></li>
        <li class="running"><svg class="s24 spin"><use href="#spinner"/></svg>16: <b>Bakta on data 1: Feature<br>nucleotide sequences</b><span class="acts"><svg class="s24"><use href="#eye"/></svg><svg class="s20 dim"><use href="#pen"/></svg><svg class="s20"><use href="#trash"/></svg></span></li>
        <li class="running"><svg class="s24 spin"><use href="#spinner"/></svg>15: <b>Bakta on data 1: Annotati<br>on and sequences (GFF3)</b><span class="acts"><svg class="s24"><use href="#eye"/></svg><svg class="s20 dim"><use href="#pen"/></svg><svg class="s20"><use href="#trash"/></svg></span></li>
        <li class="running"><svg class="s24 spin"><use href="#spinner"/></svg>14: <b>Bakta on data 1: Summar<br>y</b><span class="acts"><svg class="s24"><use href="#eye"/></svg><svg class="s20 dim"><use href="#pen"/></svg><svg class="s20"><use href="#trash"/></svg></span></li>
        <li class="ok">13: <b>Summary from [Integron Fin<br>der] on data 1</b><span class="acts"><svg class="s24"><use href="#eye"/></svg><svg class="s20"><use href="#pen"/></svg><svg class="s20"><use href="#trash"/></svg></span></li>
        <li class="ok">12: <b>Integrons annotations from<br>[Integron Finder] on data 1</b><span class="acts"><svg class="s24"><use href="#eye"/></svg><svg class="s20"><use href="#pen"/></svg><svg class="s20"><use href="#trash"/></svg></span></li>
        <li class="ok">11: <b>PlasmidFinder on data 1: raw<br>_result.txt</b><span class="acts"><svg class="s24"><use href="#eye"/></svg><svg class="s20"><use href="#pen"/></svg><svg class="s20"><use href="#trash"/></svg></span></li>
        <li class="ok">10: <b>PlasmidFinder on data 1: res<br>ults.tsv</b><span class="acts"><svg class="s24"><use href="#eye"/></svg><svg class="s20"><use href="#pen"/></svg><svg class="s20"><use href="#trash"/></svg></span></li>
        <li class="ok">9: <b>PlasmidFinder on data 1: plas<br>mid.fasta</b><span class="acts"><svg class="s24"><use href="#eye"/></svg><svg class="s20"><use href="#pen"/></svg><svg class="s20"><use href="#trash"/></svg></span></li>
        <li class="ok">8: <b>PlasmidFinder on data 1: hit_i<br>n_genome.fasta</b><span class="acts"><svg class="s24"><use href="#eye"/></svg><svg class="s20"><use href="#pen"/></svg><svg class="s20"><use href="#trash"/></svg></span></li>
        <li class="running"><svg class="s24 spin"><use href="#spinner"/></svg>7: <b>ISEScan on data 1: ORF a<br>mino acide sequences</b><span class="acts"><svg class="s24"><use href="#eye"/></svg><svg class="s20 dim"><use href="#pen"/></svg><svg class="s20"><use href="#trash"/></svg></span></li>
        <li class="running"><svg class="s24 spin"><use href="#spinner"/></svg>6: <b>ISEScan on data 1: ORF nu<br>cleotide sequences</b><span class="acts"><svg class="s24"><use href="#eye"/></svg><svg class="s20 dim"><use href="#pen"/></svg><svg class="s20"><use href="#trash"/></svg></span></li>
        <li class="running"><svg class="s24 spin"><use href="#spinner"/></svg>5: <b>ISEScan on data 1: IS nucl<br>eotide sequences</b><span class="acts"><svg class="s24"><use href="#eye"/></svg><svg class="s20 dim"><use href="#pen"/></svg><svg class="s20"><use href="#trash"/></svg></span></li>
        <li class="running"><svg class="s24 spin"><use href="#spinner"/></svg>4: <b>ISEScan on data 1: results<br>in gff format</b><span class="acts"><svg class="s24"><use href="#eye"/></svg><svg class="s20 dim"><use href="#pen"/></svg><svg class="s20"><use href="#trash"/></svg></span></li>
        <li class="running"><svg class="s24 spin"><use href="#spinner"/></svg>3: <b>ISEScan on data 1: tabular<br>results</b><span class="acts"><svg class="s24"><use href="#eye"/></svg><svg class="s20 dim"><use href="#pen"/></svg><svg class="s20"><use href="#trash"/></svg></span></li>
        <li class="running"><svg class="s24 spin"><use href="#spinner"/></svg>2: <b>ISEScan on data 1: tabular<br>summary results</b><span class="acts"><svg class="s24"><use href="#eye"/></svg><svg class="s20 dim"><use href="#pen"/></svg><svg class="s20"><use href="#trash"/></svg></span></li>
        <li class="ok">1: <b>DRR187559_contigs.fasta</b><span class="acts"><svg class="s24"><use href="#eye"/></svg><svg class="s20"><use href="#pen"/></svg><svg class="s20"><use href="#trash"/></svg></span></li>
      </ul>
    </div>
  </aside>
</div>
<script src="script.js"></script>
</body>
</html>
```
FILE: styles.css
```css
* { box-sizing: border-box; margin: 0; padding: 0; }
html, body { height: 100%; }
body {
  display: flex;
  flex-direction: column;
  overflow: hidden;
  background: #fff;
  color: #2c3143;
  font-family: "Liberation Sans", Arial, sans-serif;
  font-size: 24px;
  line-height: 36px;
}
a { color: inherit; text-decoration: none; }
button, input { font: inherit; color: inherit; }
svg { display: block; flex: none; fill: currentColor; }
.sprite { position: absolute; width: 0; height: 0; }
h1, h2 { font-weight: 400; }
ul { list-style: none; }

.s16 { width: 16px; height: 16px; }
.s20 { width: 20px; height: 20px; }
.s24 { width: 24px; height: 24px; }
.s-dd { width: 16px; height: 20px; }
.caret { width: 13px; height: 8px; }

/* Masthead */
.masthead {
  display: flex;
  align-items: center;
  height: 85px;
  flex: none;
  padding: 0 29px 0 27px;
  background: #00339a;
  color: #f8f9fb;
}
.brand { display: flex; align-items: center; gap: 8px; }
.brand-mark { width: 36px; height: 30px; }
.brand-name, .brand-site {
  font-family: "Noto Sans", sans-serif;
  font-weight: 700;
  color: #fff;
  text-shadow: 0 0 12px #1b2550;
}
.brand-name { font-size: 43px; line-height: 80px; padding-bottom: 4px; }
.brand-site { font-size: 31px; margin-left: 42px; }
.topnav { display: flex; align-self: stretch; margin: 0 auto; }
.topnav a { display: flex; align-items: center; padding: 0 13px; }
.topnav .active { background: #181b24; color: #fff; }
.topnav .caret { margin-left: 7px; margin-bottom: 4px; }
.nav-home { width: 37px; height: 29px; }
.nav-grad { width: 40px; height: 28px; }
.nav-apps { width: 34px; height: 29px; }
.nav-bell { width: 24px; height: 28px; }
.topnav .nav-last { padding: 0 20px 0 33px; }
.quota { font-size: 23px; }

/* Columns */
.app {
  display: grid;
  grid-template-columns: 157px 521px minmax(0, 1fr) 521px;
  flex: 1;
  min-height: 0;
}
.app > * { min-height: 0; overflow: hidden; }

/* Activity bar */
.activity {
  display: flex;
  flex-direction: column;
  justify-content: space-between;
  border-right: 2px solid #bdc6d2;
  background: #f8f9fb;
  color: #25537b;
  font-size: 20px;
  line-height: 31px;
  text-align: center;
}
.activity-top, .activity-bottom { display: flex; flex-direction: column; padding: 14px 7px; }
.activity-top { gap: 7px; }
.activity-bottom { gap: 14px; border-top: 3px dotted #bdc6d2; }
.activity a {
  display: flex;
  flex-direction: column;
  align-items: center;
  gap: 14px;
  padding: 14px 12px 13px;
  border-radius: 20px;
}
.activity svg { width: 28px; height: 28px; }
.activity svg.wide { width: 36px; }
.activity .current { background: #dbdfe6; }
.activity .admin { color: #e31a1e; }

/* Side panels */
.tools { border-right: 2px solid #bdc6d2; background: #f8f9fb; }
.history { display: flex; flex-direction: column; border-left: 2px solid #bdc6d2; }
.panel-head { display: flex; align-items: center; color: #25537b; }
.panel-head h2 { flex: 1; font-size: 30px; color: #2c3143; }
.plain { display: flex; border: 0; background: none; color: #25537b; }
.tools .panel-head { height: 81px; padding: 0 44px; gap: 33px; }
.tools .search { margin-top: 2px; }
.tools .plain .caret { color: #2c3143; }
.history .panel-head { height: 79px; padding: 0 48px 0 35px; gap: 35px; }
.s-ex { width: 22px; height: 16px; }
.search {
  display: flex;
  flex: none;
  height: 53px;
  margin: 0 28px 0 28px;
  border: 2px solid #bdc6d2;
  border-radius: 6px;
  background: #fff;
  overflow: hidden;
}
.search input { flex: 1; min-width: 0; padding: 0 13px; border: 0; background: #fff; }
.search input::placeholder { color: #434a66; opacity: 1; }
.search button {
  display: flex;
  align-items: center;
  justify-content: center;
  width: 57px;
  border: 0;
  border-left: 2px solid #bdc6d2;
  background: #dee1e6;
}

/* Tool list */
.tool-list { padding-top: 29px; }
.tool-list a { display: block; padding-left: 28px; font-size: 30px; line-height: 59px; }
.tool-list h3 {
  padding-left: 21px;
  border-left: 7px solid #aeb8c5;
  background: #e8ebee;
  font-size: 23px;
  line-height: 51px;
}

/* Centre */
.center { padding: 28px 37px 0 38px; }
.alert-success {
  display: flex;
  gap: 17px;
  padding: 22px 20px;
  border-radius: 9px;
  background: #c2ebc2;
  color: #375048;
}
.alert-icon { width: 56px; height: 56px; margin-top: -11px; }
.alert-success p { margin-bottom: 29px; }
.alert-success a { color: #25537b; font-weight: 700; }

.tabs { display: flex; margin: 35px 0 13px; border-bottom: 2px solid #dcdfe7; color: #25537b; }
.tabs a {
  padding: 14px 28px 15px;
  border: 2px solid transparent;
  border-bottom: 0;
  border-radius: 7px 7px 0 0;
  margin-bottom: -2px;
}
.tabs .active { border-color: #dcdfe7; background: #fff; color: #41465f; padding-bottom: 17px; }
.tabs .muted { color: #41465f; }

.alert-info {
  display: flex;
  align-items: center;
  gap: 6px;
  height: 82px;
  padding: 0 37px;
  border-radius: 9px;
  background: #daecf8;
  color: #2c3b54;
}

.btn {
  display: flex;
  align-items: center;
  gap: 12px;
  height: 50px;
  padding: 0 14px;
  border: 2px solid #bdc6d2;
  border-radius: 6px;
  background: #dee1e6;
  font-size: 20px;
}
.center > .btn { margin: 28px 0 7px; }

.progress {
  height: 28px;
  margin-bottom: 7px;
  border-radius: 7px;
  background: #c2ebc2;
  font-size: 20px;
  line-height: 30px;
  text-align: center;
}
.jobs { margin-bottom: 15px; background: linear-gradient(90deg, #c2ebc2 30%, #ffcc99 30%); }

.invocation { display: grid; grid-template-columns: 3fr 2fr; gap: 24px; margin-right: -2px; padding-right: 2px; }

/* Workflow graph */
.graph {
  position: relative;
  box-sizing: content-box;
  height: 60vh;
  border: 2px solid #e1e3e5;
  border-radius: 7px;
  overflow: hidden;
}
.grid-lines, .links { position: absolute; inset: 0; width: 100%; height: 100%; }
.links { fill: none; stroke: #25537b; stroke-width: 4; }
.node {
  position: absolute;
  width: 198px;
  border: 1px solid #25537b;
  border-radius: 4px;
  background: #fff;
  font-size: 13px;
  line-height: 28px;
}
.node-head {
  display: flex;
  align-items: center;
  gap: 6px;
  padding: 0 8px 0 10px;
  border-bottom: 1px solid #d5dae0;
  border-radius: 3px 3px 0 0;
  background: #e8ebee;
}
.node-head span { flex: 1; }
.node-head svg { width: 13px; height: 13px; }
.node-body { display: flex; align-items: center; gap: 4px; padding-left: 12px; }
.node-body svg { width: 12px; height: 12px; }
.node.ok .node-head { background: #c2ebc2; border-color: #a9d9a9; }
.node.running .node-head { background: #ffe6cd; border-color: #efd0b0; }
.node.input .node-head { background: #25537b; border-color: #25537b; color: #fff; }
.node.ok .node-body svg { color: #5fc95f; }
.node .port { position: absolute; top: 38px; width: 13px; height: 13px; }
.port.in { left: -9px; }
.port.out { right: -9px; }
#n1 { left: 45px; top: 716px; }
#n2 { left: 323px; top: 427px; }
#n3 { left: 323px; top: 712px; }
#n4 { left: 323px; top: 955px; }
#n5 { left: 888px; top: 295px; }
#n6 { left: 610px; top: 434px; }
#n7 { left: 610px; top: 567px; }
#n8 { left: 610px; top: 757px; }
#n9 { left: 888px; top: 757px; }
#n10 { left: 1166px; top: 757px; }
#n11 { left: 1454px; top: 586px; }
.hide-graph { position: absolute; top: 12px; right: 13px; }
.zoom { position: absolute; left: 28px; bottom: 28px; display: flex; align-items: center; gap: 6px; }
.zoom button {
  display: flex;
  align-items: center;
  justify-content: center;
  width: 50px;
  height: 39px;
  border: 2px solid #bdc6d2;
  border-radius: 6px;
  background: #dee1e6;
}
.zoom-level {
  width: 114px;
  border-radius: 7px;
  background: #f8f9fb;
  font-size: 23px;
  line-height: 50px;
  text-align: center;
}

/* Step list */
.steps { display: flex; flex-direction: column; gap: 14px; border-left: 2px solid #bdc6d2; }
.step {
  display: flex;
  align-items: center;
  gap: 14px;
  padding: 14px 14px 16px 12px;
  border-left: 6px solid #e8ebee;
  border-radius: 8px 8px 0 0;
  background: #e8ebee;
}
.step a { flex: 1; text-decoration: underline; text-underline-offset: 3px; text-decoration-thickness: 2px; }
.step.ok { background-color: #c2ebc2; }
.step.running { background-color: #ffe6cd; }
.s-file { width: 18px; height: 24px; }
.s-chev { width: 20px; height: 12px; }

/* Selected job */
.job-card { margin-top: 7px; border: 2px solid #e1e3e5; border-radius: 7px 7px 0 0; }
.job-card h2 {
  padding: 0 35px;
  border-bottom: 2px solid #dcdee0;
  background: #f7f7f7;
  font-size: 35px;
  line-height: 86px;
}
.job-body { padding: 35px; }
.job-info { height: 82px; border-radius: 9px; background: #daecf8; }

/* History */
.history-title { display: flex; align-items: flex-start; padding: 28px 48px 0 28px; }
.history-title h1 { flex: 1; font-size: 35px; line-height: 43px; }
.history-title .plain { margin-top: 14px; }
.history-stats {
  display: flex;
  align-items: center;
  height: 84px;
  flex: none;
  padding: 22px 15px 0 15px;
  color: #25537b;
  font-size: 20px;
}
.s-db { width: 19px; height: 22px; margin-right: 6px; }
.size { flex: 1; }
.s-mark { width: 17px; height: 20px; margin: 0 5px 0 30px; }
.refresh { margin-left: 31px; }
.history-stats .s20, .history-tools .last { width: 22px; height: 22px; }
.history-tools {
  display: flex;
  align-items: center;
  gap: 35px;
  height: 50px;
  flex: none;
  padding: 0 15px 0 19px;
  background: #dee1e6;
  color: #25537b;
}
.history-tools .last { margin-left: auto; }
.dim { color: #83808c; }
.datasets { flex: 1; min-height: 0; overflow: hidden; }
.datasets ul {
  display: flex;
  flex-direction: column;
  justify-content: space-between;
  height: calc(100% + 107px);
  margin: -42px 7px 0 6px;
}
.datasets li {
  position: relative;
  height: 100px;
  padding: 14px;
  border-radius: 8px;
  white-space: nowrap;
}
.datasets .ok { background: #c2ebc2; color: #375048; }
.datasets .running { background: #ffe6cd; color: #574133; }
.spin { display: inline-block; margin: 0 10px 0 4px; vertical-align: -5px; }
.acts {
  position: absolute;
  top: 20px;
  right: 16px;
  display: flex;
  align-items: center;
  gap: 14px;
  color: #25537b;
}
.ok .acts { gap: 16px; }
```
FILE: script.js
```js
// Draws the connectors between workflow nodes as clamped B-splines.
const edges = [[1, 2], [1, 3], [1, 4], [1, 5], [1, 11], [2, 6], [2, 7], [2, 11], [3, 8], [5, 11], [8, 9], [9, 10], [10, 11]];
const node = id => document.getElementById('n' + id);
const mix = (a, b, c, d, e, f) => `${(a * c[0] + b * d[0] + (e ? f * e[0] : 0)) / (a + b + (f || 0))} ${(a * c[1] + b * d[1] + (e ? f * e[1] : 0)) / (a + b + (f || 0))}`;

function connector(from, to) {
  const p0 = [from.offsetLeft + from.offsetWidth + 1, from.offsetTop + 45];
  const p3 = [to.offsetLeft - 1, to.offsetTop + 45];
  const dx = p3[0] - p0[0];
  const shift = Math.min(Math.hypot(dx, p3[1] - p0[1]) / 5, dx * 0.6);
  const p1 = [p0[0] + shift, p0[1]];
  const p2 = [p3[0] - shift, p3[1]];
  return `M${p0[0]} ${p0[1]}L${mix(5, 1, p0, p1)}` +
    `C${mix(2, 1, p0, p1)} ${mix(1, 2, p0, p1)} ${mix(1, 4, p0, p1, p2, 1)}` +
    `C${mix(2, 1, p1, p2)} ${mix(1, 2, p1, p2)} ${mix(1, 4, p1, p2, p3, 1)}` +
    `C${mix(2, 1, p2, p3)} ${mix(1, 2, p2, p3)} ${mix(1, 5, p2, p3)}L${p3[0]} ${p3[1]}`;
}

for (const [a, b] of edges) {
  const path = document.createElementNS('http://www.w3.org/2000/svg', 'path');
  path.setAttribute('d', connector(node(a), node(b)));
  document.getElementById('links').append(path);
}
```
